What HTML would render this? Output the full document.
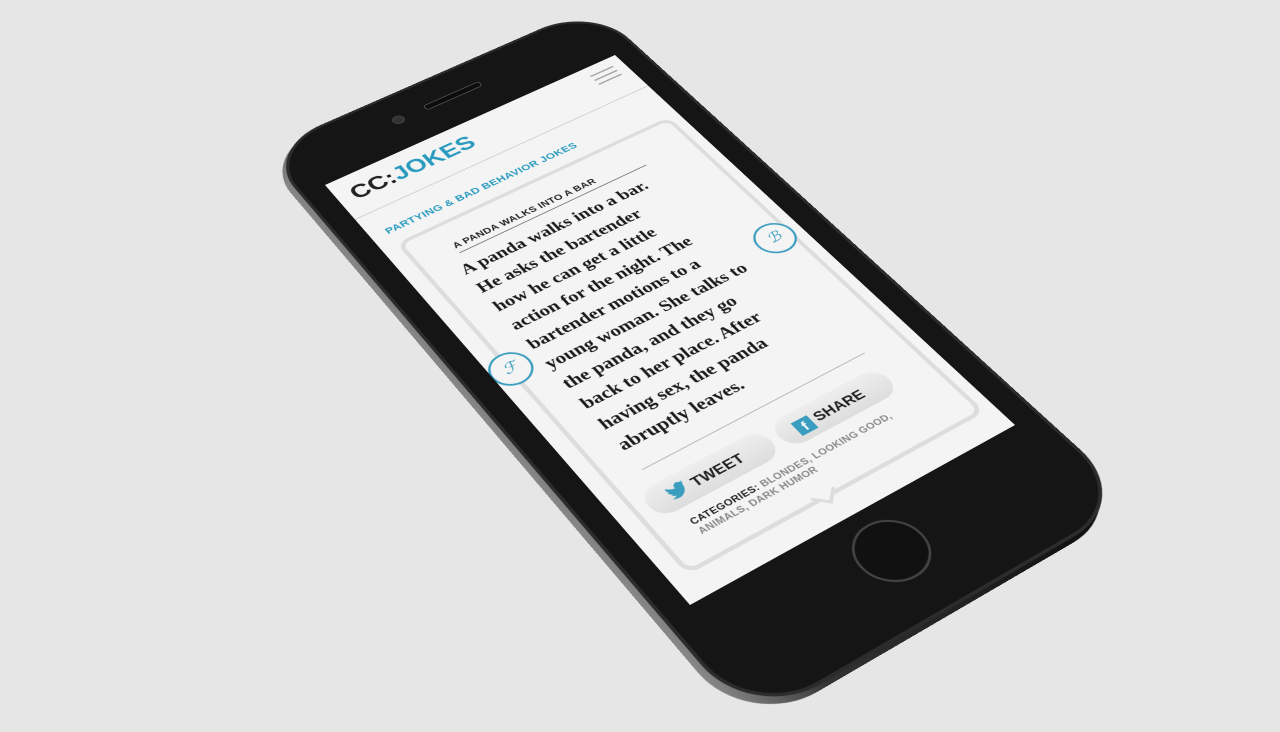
<!DOCTYPE html>
<html><head><meta charset="utf-8"><style>
html,body{margin:0;padding:0;width:1280px;height:720px;overflow:hidden;background:#e6e6e6;}
.sp{position:absolute;left:0;top:0;width:320px;height:569px;transform-origin:0 0;
transform:matrix3d(1.00572,-0.39734,0,0.00016175, 0.43364,0.55591,0,-0.00030121, 0,0,1,0, 325,185,0,1);}
.body{position:absolute;left:-25px;top:-75px;width:370px;height:755px;border-radius:62px;background:#151515;box-sizing:border-box;border:3px solid #2c2c2c;}
.thick{position:absolute;left:-31px;top:-71px;width:370px;height:755px;border-radius:62px;background:linear-gradient(90deg,#888,#333 20%,#0a0a0a);}
.screen{position:absolute;left:0;top:0;width:320px;height:569px;background:#f4f4f4;overflow:hidden;font-family:"Liberation Sans",sans-serif;}
.cam{position:absolute;left:95px;top:-45px;width:10px;height:10px;border-radius:50%;background:#333;border:1px solid #444}
.spk{position:absolute;left:130px;top:-43px;width:60px;height:6px;border-radius:3px;background:#0c0c0c;border:1px solid #555}
.home{position:absolute;left:128px;top:583px;width:60px;height:60px;border-radius:50%;border:2px solid #444;background:#111;box-sizing:border-box}
.logo{position:absolute;left:14px;top:12px;font-weight:bold;font-size:25px;color:#222}
.logo span{color:#2a9bbf}
.hamb{position:absolute;left:283px;top:12px;width:26px}
.hamb i{display:block;height:2px;background:#aaa;margin-bottom:5px}
.hl{position:absolute;left:0;top:55px;width:320px;height:1px;background:#ccc}
.cat{position:absolute;left:15px;top:80px;font-size:11px;font-weight:bold;color:#2a9bbf;letter-spacing:.3px}
.card{position:absolute;left:15px;top:103px;width:295px;height:442px;border:4px solid #ddd;border-radius:12px;box-sizing:border-box}
.ttl{position:absolute;left:36px;top:24px;width:200px;font-size:10px;font-weight:bold;color:#222;border-bottom:1px solid #777;padding-bottom:3px;letter-spacing:.3px}
.joke{position:absolute;left:26px;top:46px;width:265px;text-align:left;font-family:"Liberation Serif",serif;font-weight:bold;font-size:18px;line-height:27px;color:#1a1a1a}
.circ{position:absolute;width:34px;height:34px;border:2px solid #3a9dbf;border-radius:50%;background:#f4f4f4;color:#3a9dbf;font-family:"Liberation Serif",serif;font-style:italic;font-size:16px;text-align:center;line-height:34px}
.sep{position:absolute;left:27px;top:332px;width:225px;height:1px;background:#bbb}
.btn{position:absolute;top:350px;height:32px;border-radius:16px;background:linear-gradient(#eee,#ddd);font-weight:bold;font-size:14px;color:#222;line-height:32px;box-sizing:border-box}
.cats{position:absolute;left:28px;top:393px;width:220px;font-size:9px;font-weight:bold;color:#888;line-height:11px;letter-spacing:.3px}
.cats b{color:#222}
.tail{position:absolute;left:122px;top:424px;width:14px;height:14px;border-right:3px solid #ddd;border-bottom:3px solid #ddd;transform:rotate(45deg);background:#f4f4f4}
</style></head><body>
<div class="sp">
<div class="thick"></div>
<div class="body"></div>
<div class="cam"></div><div class="spk"></div>
<div class="home"></div>
<div class="screen">
 <div class="logo">CC:<span>JOKES</span></div>
 <div class="hamb"><i></i><i></i><i></i></div>
 <div class="hl"></div>
 <div class="cat">PARTYING &amp; BAD BEHAVIOR JOKES</div>
 <div class="card">
  <div class="ttl">A PANDA WALKS INTO A BAR</div>
  <div class="joke">A panda walks into a bar.<br>He asks the bartender<br>how he can get a little<br>action for the night. The<br>bartender motions to a<br>young woman. She talks to<br>the panda, and they go<br>back to her place. After<br>having sex, the panda<br>abruptly leaves.</div>
  <div class="circ" style="left:255px;top:162px">ℬ</div>
  <div class="circ" style="left:-20px;top:162px">ℱ</div>
  <div class="sep"></div>
  <div class="btn" style="left:10px;width:120px;padding-left:18px"><svg width="20" height="16" viewBox="0 0 24 20" style="vertical-align:-3px"><path d="M23 2.5c-.8.4-1.7.6-2.6.7.9-.6 1.6-1.4 2-2.5-.9.5-1.9.9-2.9 1.1A4.5 4.5 0 0 0 11.8 6 12.8 12.8 0 0 1 2.5 1.3a4.5 4.5 0 0 0 1.4 6 4.5 4.5 0 0 1-2-.6 4.5 4.5 0 0 0 3.6 4.5 4.5 4.5 0 0 1-2 .1 4.5 4.5 0 0 0 4.2 3.1A9 9 0 0 1 1 16.3 12.8 12.8 0 0 0 7.9 18.3c8.3 0 12.8-6.9 12.8-12.8v-.6c.9-.6 1.6-1.4 2.3-2.4z" fill="#3a9dbf"/></svg> TWEET</div>
  <div class="btn" style="left:138px;width:112px;padding-left:16px"><span style="display:inline-block;width:16px;height:16px;background:#3a9dbf;color:#fff;font-size:13px;line-height:18px;text-align:center;vertical-align:-2px">f</span> SHARE</div>
  <div class="cats"><b>CATEGORIES:</b> BLONDES, LOOKING GOOD, ANIMALS, DARK HUMOR</div>
  <div class="tail"></div>
 </div>
</div>
</div>
</body></html>
